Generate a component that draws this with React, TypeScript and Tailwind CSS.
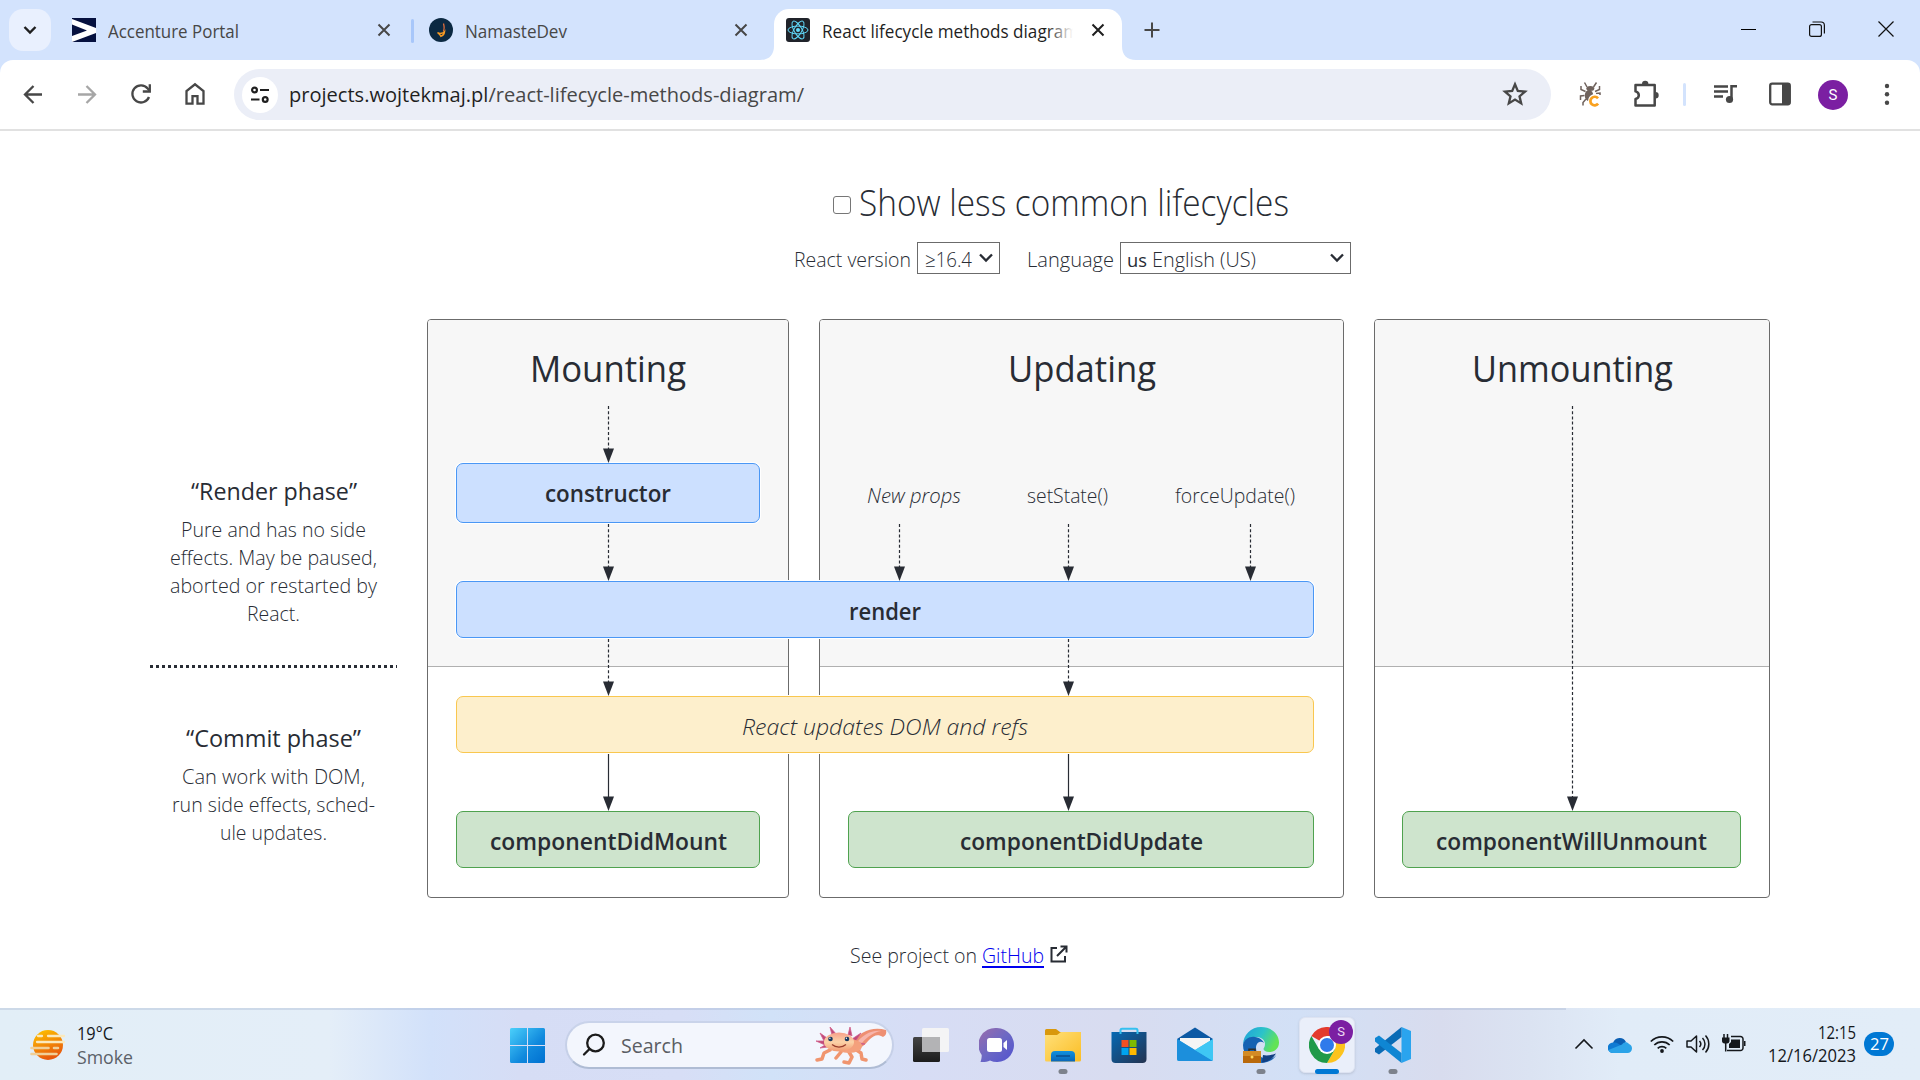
import { useLayoutEffect, useRef, type ReactNode } from "react";

/** Single line of text, stretched to the width of its box. */
function Fit({ className = "", children }: { className?: string; children: ReactNode }) {
  const outer = useRef<HTMLDivElement>(null);
  const inner = useRef<HTMLSpanElement>(null);
  useLayoutEffect(() => {
    const o = outer.current;
    const i = inner.current;
    if (!o || !i) return;
    i.style.transform = "none";
    const ratio = o.getBoundingClientRect().width / i.getBoundingClientRect().width;
    i.style.transform = `scaleX(${ratio})`;
  }, []);
  return (
    <div ref={outer} className={"shrink-0 whitespace-nowrap " + className}>
      <span ref={inner} className="inline-block origin-left">
        {children}
      </span>
    </div>
  );
}

function CloseX({ className = "" }: { className?: string }) {
  return (
    <svg viewBox="0 0 14 14" className={"h-[14px] w-[14px] shrink-0 " + className} fill="none" stroke="currentColor" strokeWidth="2">
      <path d="M1.500 1.500l11 11M12.500 1.500l-11 11" />
    </svg>
  );
}

function ReactLogo() {
  return (
    <svg viewBox="0 0 24 24" className="h-6 w-6 shrink-0" fill="none" stroke="#61dafb" strokeWidth="1">
      <rect width="24" height="24" rx="3" fill="#20232a" stroke="none" />
      <ellipse cx="12" cy="12" rx="10" ry="3.900" />
      <ellipse cx="12" cy="12" rx="10" ry="3.900" transform="rotate(60 12 12)" />
      <ellipse cx="12" cy="12" rx="10" ry="3.900" transform="rotate(120 12 12)" />
      <circle cx="12" cy="12" r="2" fill="#61dafb" stroke="none" />
    </svg>
  );
}

function TabStrip() {
  return (
    <div className="flex h-[60px] items-start bg-[#d3e3fd] text-[18px] leading-[24px] text-[#474747]">
      <div className="ml-[9px] mt-[9px] flex h-[42px] w-[42px] items-center justify-center rounded-[14px] bg-[#e9f0fe]">
        <svg viewBox="0 0 14 10" className="h-[10px] w-[14px]" fill="none" stroke="#1f1f1f" strokeWidth="2.400">
          <path d="M1.500 2l5.500 5.500L12.500 2" />
        </svg>
      </div>
      <div className="ml-[21px] mt-[18px] flex h-6 items-center">
        <svg viewBox="0 0 24 24" className="h-6 w-6">
          <rect width="24" height="24" fill="#06113f" />
          <path d="M0 1l24 9v5L0 24v-6l15-5.500L0 6.500z" fill="#fff" />
        </svg>
        <Fit className="ml-[12px] w-[131px] pt-[2px]">Accenture Portal</Fit>
        <CloseX className="ml-[138px]" />
      </div>
      <div className="ml-[20px] mt-[19px] h-6 w-[3px] rounded bg-[#a8c7fa]" />
      <div className="ml-[15px] mt-[18px] flex h-6 items-center">
        <svg viewBox="0 0 24 24" className="h-6 w-6" fill="none">
          <circle cx="12" cy="12" r="12" fill="#0b2942" />
          <path d="M14.500 5.500c.8 3 1 6-.3 8" stroke="#e8703c" strokeWidth="1.200" />
          <path d="M8.500 14.500c2 1.500 5.500 1 7-.8-.3 2.500-1.500 4-3.600 4.600-.4-1.200-1.500-2.200-3.400-3.800z" stroke="#f59a23" strokeWidth="1.500" />
        </svg>
        <Fit className="ml-[12px] w-[102px] pt-[2px]">NamasteDev</Fit>
        <CloseX className="ml-[167px]" />
      </div>
      <div className="relative ml-[26px] mt-[9px] flex h-[51px] w-[348px] items-start rounded-t-[15px] bg-white text-[#1f1f1f]">
        <svg viewBox="0 0 14 14" className="absolute -left-[14px] bottom-0 h-[14px] w-[14px]">
          <path d="M14 0v14H0C9 14 14 9 14 0z" fill="#fff" />
        </svg>
        <svg viewBox="0 0 14 14" className="absolute -right-[14px] bottom-0 h-[14px] w-[14px]">
          <path d="M0 0v14h14C5 14 0 9 0 0z" fill="#fff" />
        </svg>
        <div className="ml-[12px] mt-[9px] flex h-6 items-center">
          <ReactLogo />
          <div className="relative ml-[12px] w-[251px] overflow-hidden">
            <Fit className="w-[257px] pt-[2px]">React lifecycle methods diagram</Fit>
            <div className="absolute right-0 top-0 h-full w-[26px] bg-linear-to-r from-transparent to-white" />
          </div>
          <CloseX className="ml-[18px]" />
        </div>
      </div>
      <svg viewBox="0 0 16 16" className="ml-[22px] mt-[22px] h-4 w-4" stroke="#474747" strokeWidth="2">
        <path d="M8 .5v15M.5 8h15" />
      </svg>
      <div className="ml-auto mr-[26px] mt-[21px] flex gap-[53px]">
        <svg viewBox="0 0 16 16" className="h-4 w-4" stroke="#000" shapeRendering="crispEdges">
          <path d="M.5 8.500h15" />
        </svg>
        <svg viewBox="0 0 16 16" className="h-4 w-4" fill="none" stroke="#111" strokeWidth="1.200">
          <rect x=".6" y="3.600" width="11.800" height="11.800" rx="2" />
          <path d="M3.500 1h8.500a3.400 3.400 0 0 1 3.400 3.400v8" />
        </svg>
        <svg viewBox="0 0 16 16" className="h-4 w-4" fill="none" stroke="#111" strokeWidth="1.200">
          <path d="M.5.5l15 15M15.500.5l-15 15" />
        </svg>
      </div>
    </div>
  );
}

function Toolbar() {
  return (
    <div className="bg-[#d3e3fd]">
      <div className="flex h-[71px] items-start rounded-t-[13px] border-b-2 border-[#e1e1e1] bg-white text-[#474747]">
        <div className="ml-[21px] mt-[22px] flex gap-[30px]">
          <svg viewBox="0 0 24 24" className="h-6 w-6" fill="none" stroke="currentColor" strokeWidth="2.300">
            <path d="M21 12.500H4.500M12.500 4L4 12.500l8.500 8.500" />
          </svg>
          <svg viewBox="0 0 24 24" className="h-6 w-6" fill="none" stroke="#a6a6a6" strokeWidth="2.300">
            <path d="M3 12.500h16.500M11.500 4L20 12.500l-8.500 8.500" />
          </svg>
          <svg viewBox="0 0 24 24" className="h-6 w-6" fill="none" stroke="currentColor" strokeWidth="2.300">
            <path d="M20 15a8.600 8.600 0 1 1-1.300-8.500l1.700 2" />
            <path d="M20.800 2.300v7.200h-7" />
          </svg>
          <svg viewBox="0 0 24 24" className="h-6 w-6" fill="none" stroke="currentColor" strokeWidth="2.300">
            <path d="M3.500 21.700V9L12 2.300 20.500 9v12.700h-6v-7.500h-5v7.500z" />
          </svg>
        </div>
        <div className="ml-[27px] mt-[9px] flex h-[51px] w-[1317px] items-center rounded-full bg-[#ebeef7]">
          <div className="ml-[8px] flex h-9 w-9 items-center justify-center rounded-full bg-white">
            <svg viewBox="0 0 20 18" className="h-[18px] w-5" fill="none" stroke="#1f1f1f" strokeWidth="2.200">
              <circle cx="4.500" cy="4" r="2.400" />
              <path d="M10 4h9M1 13.500h8.500" />
              <circle cx="15.200" cy="13.500" r="2.400" />
            </svg>
          </div>
          <Fit className="-mt-[2px] ml-[11px] w-[515px] text-[20.500px] leading-[28px] text-[#474747]">
            <span className="text-[#1f1f1f]">projects.wojtekmaj.pl</span>/react-lifecycle-methods-diagram/
          </Fit>
          <svg viewBox="0 0 26 26" className="mb-[2px] ml-auto mr-[23px] h-[26px] w-[26px]" fill="none" stroke="currentColor" strokeWidth="2.300">
            <path d="M13 3.300l2.800 6.700 7.200.6-5.500 4.700 1.700 7.100-6.200-3.800-6.200 3.800 1.700-7.100L3 10.600l7.200-.6z" />
          </svg>
        </div>
        <svg viewBox="0 0 24 26" className="ml-[28px] mt-[21px] h-[26px] w-6" fill="none" stroke="#6f625c" strokeWidth="1.500">
          <path d="M8 6L5.500 1.500M14.500 6L17.500 1.500M6.500 10.500L2 8.500V5M16 10.500l4.500-2V5M5.500 14.500L1.500 15v4M7 18l-3 3.500v3M17 12.500l4-.500v2" />
          <ellipse cx="11.300" cy="7.500" rx="4" ry="2.500" fill="#6f625c" stroke="none" />
          <ellipse cx="10" cy="14.500" rx="4.200" ry="5.500" fill="#6f625c" stroke="none" />
          <circle cx="16" cy="20" r="7" fill="#fff" stroke="none" />
          <path d="M19 17.300a4.300 4.300 0 1 0 .1 5.400" stroke="#f9a11f" strokeWidth="2.700" />
        </svg>
        <svg viewBox="0 0 28 30" className="ml-[28px] mt-[18px] h-[30px] w-7" fill="none" stroke="currentColor" strokeWidth="2.500">
          <path d="M4.500 7h19.200v20.500H4.500v-6.500c2.200-.5 3.300-2 3.300-3.800s-1.100-3.300-3.300-3.800z" strokeLinejoin="round" />
          <path d="M11 6a3.200 3.200 0 0 1 6.400 0zM24.500 14a3.200 3.200 0 0 1 0 6.400z" fill="currentColor" stroke="none" />
        </svg>
        <div className="ml-[24px] mt-[23px] h-[23px] w-[3px] rounded bg-[#d3e3fd]" />
        <svg viewBox="0 0 24 24" className="ml-[27px] mt-[22px] h-6 w-6" fill="none" stroke="currentColor" strokeWidth="2.500">
          <path d="M1 4.500h14M1 9.500h14M1 14.500h9M18.500 18V4.300H24" />
          <circle cx="16.500" cy="17.500" r="3.600" fill="currentColor" stroke="none" />
        </svg>
        <svg viewBox="0 0 22 24" className="ml-[32px] mt-[22px] h-6 w-[22px]">
          <rect x="1.200" y="1.700" width="19.600" height="20.600" rx="2" fill="none" stroke="currentColor" strokeWidth="2.300" />
          <path d="M13 2h8v20h-8z" fill="currentColor" />
        </svg>
        <div className="ml-[27px] mt-[20px] flex h-[30px] w-[30px] items-center justify-center rounded-full bg-[#7b1fa2] font-[Roboto] text-[15px] text-white">S</div>
        <svg viewBox="0 0 6 24" className="ml-[36px] mt-[22px] h-6 w-[6px]" fill="currentColor">
          <circle cx="3" cy="4" r="2.200" />
          <circle cx="3" cy="12.300" r="2.200" />
          <circle cx="3" cy="20.700" r="2.200" />
        </svg>
      </div>
    </div>
  );
}

function Chevron() {
  return (
    <svg viewBox="0 0 14 10" className="h-[10px] w-[14px] shrink-0" fill="none" stroke="#282c34" strokeWidth="2.300">
      <path d="M1 1.500l6 6 6-6" />
    </svg>
  );
}

function Controls() {
  return (
    <div className="h-[188px] font-light">
      <div className="flex items-center pl-[833px] pt-[47px]">
        <div className="mt-[3px] h-[18px] w-[18px] rounded-[3px] border-[1.5px] border-[#767676] bg-white" />
        <Fit className="ml-[8px] w-[430px] text-[36px] leading-[50px]">Show less common lifecycles</Fit>
      </div>
      <div className="mt-[14px] flex h-8 items-center pl-[794px] text-[20px] leading-8">
        <Fit className="w-[117px] pt-[4px]">React version</Fit>
        <div className="ml-[6px] flex h-8 w-[83px] items-center border border-[#6b6b6b] pl-[7px] pr-[6px]">
          <Fit className="w-[47px] pt-[4px]">≥16.4</Fit>
          <span className="ml-auto flex"><Chevron /></span>
        </div>
        <Fit className="ml-[27px] w-[87px] pt-[4px]">Language</Fit>
        <div className="ml-[6px] flex h-8 w-[231px] items-center border border-[#6b6b6b] pl-[6px] pr-[6px]">
          <Fit className="w-[20px] pt-[4px] text-[19px] font-normal">us</Fit>
          <Fit className="ml-[5px] w-[104px] pt-[4px]">English (US)</Fit>
          <span className="ml-auto flex"><Chevron /></span>
        </div>
      </div>
    </div>
  );
}

function Phases() {
  return (
    <div className="ml-[150px] flex w-[247px] flex-col items-center text-[20px] font-light leading-[28px]">
      <Fit className="mt-[158px] w-[166px] text-[23px] font-normal leading-[28px]">“Render phase”</Fit>
      <Fit className="mt-[11px] w-[185px]">Pure and has no side</Fit>
      <Fit className="w-[207px]">effects. May be paused,</Fit>
      <Fit className="w-[207px]">aborted or restarted by</Fit>
      <Fit className="w-[53px]">React.</Fit>
      <svg viewBox="0 0 247 3" className="mt-[37px] h-[3px] w-[247px]" shapeRendering="crispEdges">
        <path d="M0 1.500h247" stroke="#282c34" strokeWidth="3" strokeDasharray="3 3" />
      </svg>
      <Fit className="mt-[56px] w-[175px] text-[23px] font-normal leading-[28px]">“Commit phase”</Fit>
      <Fit className="mt-[11px] w-[183px]">Can work with DOM,</Fit>
      <Fit className="w-[203px]">run side effects, sched-</Fit>
      <Fit className="w-[107px]">ule updates.</Fit>
    </div>
  );
}

function Panel({ className, children }: { className: string; children: ReactNode }) {
  return (
    <div className={"flex h-[579px] shrink-0 flex-col items-center overflow-hidden rounded-[4px] border-[1.5px] border-[#6b6b6b] bg-white " + className}>
      <div className="flex h-[347px] w-full shrink-0 justify-center border-b-[1.5px] border-[#b0b0b0] bg-[#f7f7f7] pt-[24px] text-[36px] leading-[50px]">
        {children}
      </div>
    </div>
  );
}

function Node({ className, children }: { className: string; children: ReactNode }) {
  return (
    <div className={"absolute flex justify-center rounded-[7px] border-[1.5px] text-[22.500px] leading-[56px] ring-1 ring-white " + className}>
      {children}
    </div>
  );
}

const BLUE = "border-[#4a97f5] bg-[#cce0ff]";
const GREEN = "border-[#4fa24f] bg-[#cee4cd]";

/* Arrow coordinates are relative to the diagram's top left corner. */
const ARROWS = [
  { x: 181.5, from: 87, to: 144, dashed: true },
  { x: 181.5, from: 205, to: 262, dashed: true },
  { x: 472.5, from: 205, to: 262, dashed: true },
  { x: 641.5, from: 205, to: 262, dashed: true },
  { x: 823.5, from: 205, to: 262, dashed: true },
  { x: 181.5, from: 320, to: 377, dashed: true },
  { x: 641.5, from: 320, to: 377, dashed: true },
  { x: 181.5, from: 435, to: 492, dashed: false },
  { x: 641.5, from: 435, to: 492, dashed: false },
  { x: 1145.5, from: 87, to: 492, dashed: true },
];

function Diagram() {
  return (
    <div className="relative ml-[30px] flex h-[579px] w-[1343px] gap-[30px]">
      <Panel className="w-[362px]">
        <Fit className="w-[156px]">Mounting</Fit>
      </Panel>
      <Panel className="w-[525px]">
        <Fit className="w-[148px]">Updating</Fit>
      </Panel>
      <Panel className="w-[396px]">
        <Fit className="w-[201px]">Unmounting</Fit>
      </Panel>
      <Node className={"left-[29px] top-[144px] h-[60px] w-[304px] font-semibold " + BLUE}>
        <Fit className="w-[126px] pt-[2px]">constructor</Fit>
      </Node>
      <Node className={"left-[29px] top-[262px] h-[57px] w-[858px] font-semibold " + BLUE}>
        <Fit className="w-[72px] pt-[2px]">render</Fit>
      </Node>
      <Node className="left-[29px] top-[377px] h-[57px] w-[858px] border-[#f9c74f] bg-[#fdefcc] font-light italic">
        <Fit className="w-[286px] pt-[2px]">React updates DOM and refs</Fit>
      </Node>
      <Node className={"left-[29px] top-[492px] h-[57px] w-[304px] font-semibold " + GREEN}>
        <Fit className="w-[237px] pt-[2px]">componentDidMount</Fit>
      </Node>
      <Node className={"left-[421px] top-[492px] h-[57px] w-[466px] font-semibold " + GREEN}>
        <Fit className="w-[243px] pt-[2px]">componentDidUpdate</Fit>
      </Node>
      <Node className={"left-[975px] top-[492px] h-[57px] w-[339px] font-semibold " + GREEN}>
        <Fit className="w-[271px] pt-[2px]">componentWillUnmount</Fit>
      </Node>
      <div className="absolute left-[440px] top-[163px] flex text-[20px] font-light leading-[28px]">
        <Fit className="w-[94px] italic">New props</Fit>
        <Fit className="ml-[66px] w-[81px]">setState()</Fit>
        <Fit className="ml-[67px] w-[120px]">forceUpdate()</Fit>
      </div>
      <svg viewBox="0 0 1343 579" className="absolute left-0 top-0 h-[579px] w-[1343px]">
        {ARROWS.map((a) => (
          <g key={`${a.x}-${a.from}`}>
            <path d={`M${a.x} ${a.from}V${a.to - 13}`} stroke="#282c34" strokeWidth="1.200" strokeDasharray={a.dashed ? "3 2.200" : undefined} />
            <path d={`M${a.x - 5.5} ${a.to - 14.5}h11l-5.500 14.500z`} fill="#282c34" />
          </g>
        ))}
      </svg>
    </div>
  );
}

function Footer() {
  return (
    <div className="mt-[44px] flex h-7 pl-[850px] text-[20px] font-light leading-7">
      <Fit className="w-[127px]">See project on</Fit>
      <Fit className="ml-[5px] w-[62px] text-[#0000ee]">
        <a className="underline decoration-2 underline-offset-[3px]">GitHub</a>
      </Fit>
      <svg viewBox="0 0 18 18" className="ml-[6px] mt-[3px] h-[18px] w-[18px]" fill="none" stroke="#282c34" strokeWidth="2">
        <path d="M7 3H1.500v13.500h13.500V11" />
        <path d="M10.500 1.500H16.500v6M16.500 1.500L7 11" />
      </svg>
    </div>
  );
}

function Axolotl() {
  return (
    <svg viewBox="0 0 72 40" className="h-10 w-[72px]" fill="none">
      <defs>
        <linearGradient id="axBody" x1="0" y1="0" x2="0" y2="1">
          <stop offset="0" stopColor="#f6a08a" />
          <stop offset=".5" stopColor="#fbd3a8" />
          <stop offset="1" stopColor="#f29a72" />
        </linearGradient>
      </defs>
      <path d="M36 20C44 6 58 1 71 5c1 4-1 6-3 7-5-3-9-2-14 3-5 6-9 9-16 10z" fill="#ee8f72" />
      <path d="M40 20C47 10 56 5 66 6c-7 1-14 6-19 12z" fill="#f7b5ab" />
      <path d="M12 13L5 8l4 8-8 0 9 4-5 3 8-1M17 10L15 2l7 8M33 10l2-8 2 9M37 14l9-6-6 9 10 2-12 1 8 4-10-2" fill="#c04a78" stroke="#d0608a" strokeWidth=".8" strokeLinejoin="round" />
      <path d="M15 25L9 28l-2 6-5 1M26 27l-5 6M34 27l3 5-3 6-5-1M40 24l6 4 1 6 4 1" stroke="#f0956f" strokeWidth="3.500" strokeLinecap="round" strokeLinejoin="round" />
      <ellipse cx="34" cy="21" rx="13" ry="7" fill="#f4a07c" />
      <ellipse cx="24" cy="17" rx="15" ry="9.500" fill="url(#axBody)" />
      <circle cx="15.500" cy="14" r="2.300" fill="#16385f" />
      <circle cx="32" cy="14" r="2.300" fill="#16385f" />
      <circle cx="14.900" cy="13.300" r=".7" fill="#fff" />
      <circle cx="31.400" cy="13.300" r=".7" fill="#fff" />
      <path d="M17 19.500c4 3.500 10 3.500 14 0" stroke="#9a3f2d" strokeWidth="1.200" />
    </svg>
  );
}

function Indicator({ active = false }: { active?: boolean }) {
  return active ? (
    <span className="absolute left-1/2 top-[59px] h-[5px] w-6 -translate-x-1/2 rounded-full bg-[#0078d4]" />
  ) : (
    <span className="absolute left-1/2 top-[59px] h-[5px] w-[9px] -translate-x-1/2 rounded-full bg-[#7d828c]" />
  );
}

function App36({ children, className = "" }: { children: ReactNode; className?: string }) {
  return <div className={"relative flex h-[70px] w-9 shrink-0 items-center justify-center " + className}>{children}</div>;
}

function TaskbarApps() {
  return (
    <div className="flex gap-[30px]">
      <App36>
        <svg viewBox="0 0 36 36" className="h-9 w-9">
          <defs>
            <linearGradient id="tv" x1="0" y1="0" x2="0" y2="1"><stop offset="0" stopColor="#444" /><stop offset="1" stopColor="#1c1c1c" /></linearGradient>
          </defs>
          <rect x="0" y="10" width="27" height="25" rx="1.500" fill="url(#tv)" />
          <rect x="9" y="1" width="27" height="24" rx="1.500" fill="#f4f4f5" />
          <path d="M9 10h18v15H9z" fill="#b3b3b5" />
        </svg>
      </App36>
      <App36>
        <svg viewBox="0 0 36 36" className="h-9 w-9">
          <defs>
            <linearGradient id="chat" x1="0" y1="0" x2="1" y2="1"><stop offset="0" stopColor="#9b6cab" /><stop offset=".5" stopColor="#6c68c4" /><stop offset="1" stopColor="#5152cf" /></linearGradient>
          </defs>
          <path d="M18 1a17 17 0 1 1-7 32.500c-3 1.500-6 1.700-9.500 1.500 1-3 1.300-5 1.200-7A17 17 0 0 1 18 1z" fill="url(#chat)" />
          <rect x="8" y="11" width="15" height="14" rx="2.500" fill="#fff" />
          <path d="M24.500 16l3.500-3v10l-3.500-3z" fill="#fff" />
        </svg>
      </App36>
      <App36>
        <svg viewBox="0 0 36 36" className="h-9 w-9">
          <defs>
            <linearGradient id="fold" x1="0" y1="0" x2="1" y2="1"><stop offset="0" stopColor="#ffe07a" /><stop offset="1" stopColor="#fbbd24" /></linearGradient>
            <linearGradient id="foldb" x1="0" y1="0" x2="0" y2="1"><stop offset="0" stopColor="#1191df" /><stop offset="1" stopColor="#0a66b8" /></linearGradient>
          </defs>
          <path d="M0 3.500A1.500 1.500 0 0 1 1.500 2H11l4 3h19.500A1.500 1.500 0 0 1 36 6.500V12H0z" fill="#d9980c" />
          <path d="M0 8h12l4-3h20v28a1.500 1.500 0 0 1-1.500 1.500h-33A1.500 1.500 0 0 1 0 33z" fill="url(#fold)" />
          <path d="M6 34.500V28a4 4 0 0 1 4-4h16a4 4 0 0 1 4 4v6.500z" fill="url(#foldb)" />
          <path d="M11 29h14" stroke="#0a4d8e" strokeWidth="1.500" />
        </svg>
        <Indicator />
      </App36>
      <App36>
        <svg viewBox="0 0 36 36" className="h-9 w-9">
          <defs>
            <linearGradient id="store" x1="0" y1="0" x2="1" y2="1"><stop offset="0" stopColor="#0669b4" /><stop offset="1" stopColor="#243350" /></linearGradient>
          </defs>
          <path d="M.5 5h35v27a4 4 0 0 1-4 4h-27a4 4 0 0 1-4-4z" fill="url(#store)" />
          <path d="M9.500 7V3A1.500 1.500 0 0 1 11 1.700h14A1.500 1.500 0 0 1 26.500 3v4" fill="none" stroke="#35c0f0" strokeWidth="2" />
          <path d="M10.500 13h7v7h-7z" fill="#f25022" /><path d="M18.500 13h7v7h-7z" fill="#7fba00" />
          <path d="M10.500 21h7v7h-7z" fill="#00a4ef" /><path d="M18.500 21h7v7h-7z" fill="#ffb900" />
        </svg>
      </App36>
      <App36>
        <svg viewBox="0 0 36 36" className="h-9 w-9">
          <path d="M0 12L18 .5 36 12v5H0z" fill="#0c59a4" />
          <path d="M3 11h30v9L18 28 3 20z" fill="#f5f5f5" />
          <path d="M0 12l18 11L36 12v20a2 2 0 0 1-2 2H2a2 2 0 0 1-2-2z" fill="#35b8ee" />
          <path d="M0 12l36 22H2a2 2 0 0 1-2-2z" fill="#1c8fdc" />
          <path d="M18 23L36 12v20.500a2 2 0 0 1-.8 1z" fill="#3fc7f4" />
        </svg>
      </App36>
      <App36>
        <svg viewBox="0 0 36 36" className="h-9 w-9">
          <defs>
            <linearGradient id="edge" x1="0" y1="0" x2="1" y2=".4"><stop offset="0" stopColor="#1e9fdc" /><stop offset=".55" stopColor="#2cc3c9" /><stop offset="1" stopColor="#62e356" /></linearGradient>
          </defs>
          <path d="M0 18A18 18 0 0 1 18 0c11 0 18 7.500 18 15.500 0 6-4.500 9.500-9.500 9.500-4 0-6-1.500-6-3 0-1 1.500-2 1.500-5 0-4-3.500-7-9-7C6 10 1 13 0 18z" fill="url(#edge)" />
          <path d="M0 18c1-6 7-9 12-8 4 .6 8 3 9 6-3-2.500-8-1-8 5 0 7 6 11 12 11 4 0 7-2 8.500-4.500C31 33 25 36 18 36 8 36 0 28 0 18z" fill="#1562b3" />
          <path d="M20 28c4 1 9 0 13-1.500-3 5-8 8.500-14 9z" fill="#123f82" />
          <path d="M0 24h18v12H0z" fill="#b9690b" />
          <path d="M0 24h18v5H0z" fill="#d38b25" />
          <path d="M6 24v-1.800h6V24" fill="none" stroke="#2f2f2f" strokeWidth="1.500" />
          <circle cx="9" cy="30" r="1.500" fill="#ffd75a" />
        </svg>
        <Indicator />
      </App36>
      <App36>
        <div className="absolute -left-[10px] top-[7px] h-[56px] w-[56px] rounded-[6px] border border-[#dde3f2] bg-[#eaeffa] shadow-sm" />
        <svg viewBox="0 0 36 36" className="relative h-9 w-9">
          <path d="M18 18L2.400 9A18 18 0 0 1 33.600 9H18z" fill="#e33b2e" />
          <path d="M18 18L33.600 9A18 18 0 0 1 18 36l7.800-13.500z" fill="#fcc31e" />
          <path d="M18 18l7.800 4.500L18 36A18 18 0 0 1 2.400 9l7.800 13.500z" fill="#209a49" />
          <circle cx="18" cy="18" r="9" fill="#fff" />
          <circle cx="18" cy="18" r="7" fill="#2f7aeb" />
        </svg>
        <div className="absolute left-[20px] top-[10px] flex h-6 w-6 items-center justify-center rounded-full bg-[#7b1fa2] font-[Roboto] text-[13px] text-[#ecd9f3]">S</div>
        <Indicator active />
      </App36>
      <App36>
        <svg viewBox="0 0 36 36" className="h-9 w-9">
          <path d="M26.500 0L36 4v28l-9.500 4z" fill="#2aa4ee" />
          <path d="M26.500 0v10L4 27.500 0 25v-3.500z" fill="#0a6bb5" />
          <path d="M26.500 36V26L4 8.500 0 11v3.500z" fill="#0f86d3" />
        </svg>
        <Indicator />
      </App36>
    </div>
  );
}

function Tray() {
  return (
    <div className="ml-auto flex h-[70px] items-center text-[#15181c]">
      <svg viewBox="0 0 20 12" className="mb-[3px] mr-[14px] h-3 w-5" fill="none" stroke="currentColor" strokeWidth="1.600">
        <path d="M1.500 10.500L10 2l8.500 8.500" />
      </svg>
      <svg viewBox="0 0 24 16" className="mb-px mr-[18px] h-4 w-6">
        <path d="M5 6a7 7 0 0 1 13-1l-6 6-8 1z" fill="#0a5fb4" />
        <path d="M5 5.500C9 5 11 7 15 10l-10 6a5.200 5.200 0 0 1 0-10.500z" fill="#0f7bd3" />
        <path d="M24 11.500a4.500 4.500 0 0 1-4.500 4.500H5c-2 0-4-1.200-4.600-3L14 7.500c2-2.500 5-3 7-.500 2 .7 3 2.300 3 4.500z" fill="#2ba3e8" />
      </svg>
      <svg viewBox="0 0 24 18" className="mb-[3px] mr-[12px] h-[18px] w-6" fill="none" stroke="currentColor" strokeWidth="1.700">
        <path d="M.8 6.500a16 16 0 0 1 22.400 0M4.300 10a11 11 0 0 1 15.400 0M7.700 13.300a6.200 6.200 0 0 1 8.600 0" />
        <circle cx="12" cy="16" r="1.900" fill="currentColor" stroke="none" />
      </svg>
      <svg viewBox="0 0 24 20" className="mb-[2px] mr-[12px] h-5 w-6" fill="none" stroke="currentColor" strokeWidth="1.500" strokeLinejoin="round">
        <path d="M1 7v6h4l5.500 5V2L5 7zM13.500 7a4.500 4.500 0 0 1 0 6M16.500 4a8.500 8.500 0 0 1 0 12M19.500 1.500a12.500 12.500 0 0 1 0 17" />
      </svg>
      <svg viewBox="0 0 24 20" className="mb-[4px] mr-[22px] h-5 w-6" fill="none" stroke="currentColor" strokeWidth="1.500">
        <path d="M9 3.500h9.500A2.500 2.500 0 0 1 21 6v9a2.500 2.500 0 0 1-2.500 2.500H5" />
        <path d="M22 8h1.500v5H22z" fill="currentColor" stroke="none" />
        <path d="M9 6.500h9v8.500H7v-4l2-2z" fill="currentColor" stroke="none" />
        <path d="M0 4.500h7.500V8c0 1.500-1 2.500-2.500 2.500H2.500C1 10.500 0 9.500 0 8z" fill="currentColor" stroke="none" />
        <path d="M2 1v4M5.500 1v4M3.700 10v8.500" />
      </svg>
      <div className="-mt-[2px] flex flex-col items-end text-[17.500px] leading-[23px]">
        <Fit className="w-[38px]">12:15</Fit>
        <Fit className="w-[88px]">12/16/2023</Fit>
      </div>
      <div className="mb-[2px] ml-[8px] mr-[26px] flex h-6 w-[30px] items-center justify-center rounded-full bg-[#0078d4] text-[16px] leading-6 text-white">
        <Fit className="w-[19px]">27</Fit>
      </div>
    </div>
  );
}

function Taskbar() {
  return (
    <div className="relative flex h-[72px] bg-[linear-gradient(90deg,#e2eef7_0px,#e4eef8_330px,#d2e1fa_430px,#d6ddf5_520px,#d7def6_680px,#d1e2f8_770px,#d7ddf5_920px,#d8dcf0_1120px,#d2e0f6_1300px,#d8dcee_1440px,#dbe3f2_1530px,#e1ecf8_1620px,#e2edf8_1920px)] pt-[2px]">
      <div className="absolute left-0 top-0 h-[2px] w-[1566px] bg-[#98a9c8]/30" />
      <div className="flex w-[510px] shrink-0 items-center pl-[30px]">
        <svg viewBox="0 0 36 32" className="h-8 w-9" fill="none">
          <defs>
            <linearGradient id="sun" x1="0" y1="0" x2=".4" y2="1"><stop offset="0" stopColor="#ffc800" /><stop offset="1" stopColor="#e8590c" /></linearGradient>
          </defs>
          <circle cx="18" cy="16" r="15" fill="url(#sun)" />
          <path d="M8 7h4M18 7h16M7 13h27" stroke="#fbe9bd" strokeWidth="2.300" strokeLinecap="round" />
          <path d="M1.500 19h17M24 19h4M1.500 25h25" stroke="#f0cf98" strokeWidth="2.600" strokeLinecap="round" />
        </svg>
        <div className="ml-[11px] text-[17.500px] leading-6">
          <Fit className="w-[36px] text-[#15181c]">19°C</Fit>
          <Fit className="w-[56px] text-[#5b6168]">Smoke</Fit>
        </div>
      </div>
      <svg viewBox="0 0 35 35" className="mt-[18px] h-[35px] w-[35px] shrink-0">
        <defs>
          <linearGradient id="win" x1="0" y1="0" x2="35" y2="35" gradientUnits="userSpaceOnUse"><stop offset="0" stopColor="#4bd0fb" /><stop offset=".6" stopColor="#1089dd" /><stop offset="1" stopColor="#0070d0" /></linearGradient>
        </defs>
        <path d="M1.500 0H17v17H0V1.500A1.500 1.500 0 0 1 1.500 0zM18 0h15.500A1.500 1.500 0 0 1 35 1.500V17H18zM0 18h17v17H1.500A1.500 1.500 0 0 1 0 33.500zM18 18h17v15.500a1.500 1.500 0 0 1-1.500 1.500H18z" fill="url(#win)" />
      </svg>
      <div className="ml-[20px] mt-[11px] flex h-[48px] w-[329px] shrink-0 items-center rounded-full border-2 border-b-[#afbcd4] border-l-[#c6d0e8] border-r-[#c6d0e8] border-t-[#c9d3ea] bg-[#f3f6fd]">
        <svg viewBox="0 0 24 24" className="ml-[15px] h-6 w-6" fill="none" stroke="#1b1b1b" strokeWidth="2.300" strokeLinecap="round">
          <circle cx="13.500" cy="10" r="8.300" />
          <path d="M7.500 16L2 21.500" />
        </svg>
        <Fit className="ml-[15px] mt-[2px] w-[62px] text-[19.500px] leading-7 text-[#5a5d63]">Search</Fit>
        <div className="ml-auto mr-[5px]"><Axolotl /></div>
      </div>
      <div className="ml-[19px]">
        <TaskbarApps />
      </div>
      <Tray />
    </div>
  );
}

export default function App() {
  return (
    <div className="flex h-[1080px] w-[1920px] flex-col overflow-hidden bg-white font-['Open_Sans','Noto_Sans',sans-serif] text-[#282c34]">
      <TabStrip />
      <Toolbar />
      <main className="h-[877px] shrink-0">
        <Controls />
        <div className="flex">
          <Phases />
          <Diagram />
        </div>
        <Footer />
      </main>
      <Taskbar />
    </div>
  );
}
